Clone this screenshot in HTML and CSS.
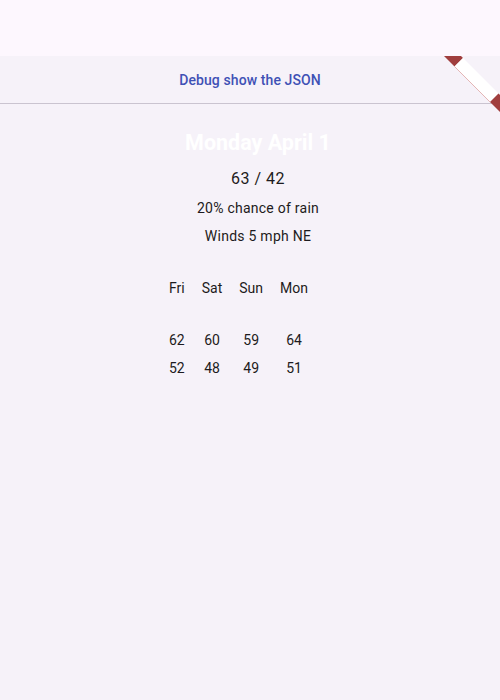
FILE: index.html
```html
<!DOCTYPE html>
<html>
<head>
<meta charset="utf-8">
<link rel="stylesheet" href="styles.css">
</head>
<body>
<div class="appbar"></div>
<main class="page">
  <div class="action-row">
    <button class="text-btn">Debug show the JSON</button>
  </div>
  <hr class="divider">
  <section class="today">
    <h1 class="day-title">Monday April 1</h1>
    <div class="temps">63 / 42</div>
    <div class="info">20% chance of rain</div>
    <div class="info winds">Winds 5 mph NE</div>
  </section>
  <section class="forecast">
    <div class="fcol"><span class="fday">Fri</span><span class="ficon"></span><span class="fnum">62</span><span class="fnum">52</span></div>
    <div class="fcol"><span class="fday">Sat</span><span class="ficon"></span><span class="fnum">60</span><span class="fnum">48</span></div>
    <div class="fcol"><span class="fday">Sun</span><span class="ficon"></span><span class="fnum">59</span><span class="fnum">49</span></div>
    <div class="fcol"><span class="fday">Mon</span><span class="ficon"></span><span class="fnum">64</span><span class="fnum">51</span></div>
  </section>
</main>
<svg class="debug-banner" width="60" height="56" viewBox="440 56 60 56" aria-hidden="true">
  <polygon points="447.5,42.5 463,58 454.5,66.5 439,51" fill="#a03e3e"/>
  <polygon points="454.5,66.5 490,102 498.5,93.5 463,58" fill="#ffffff"/>
  <line x1="454.5" y1="66.5" x2="490" y2="102" stroke="#e4b5b5" stroke-width="1"/>
  <polygon points="490,102 504,116 512.5,107.5 498.5,93.5" fill="#a03e3e"/>
</svg>
</body>
</html>
```
FILE: styles.css
```css
html, body {
  margin: 0;
  padding: 0;
}
body {
  width: 500px;
  height: 700px;
  background: #f6f2f9;
  font-family: Roboto, "Liberation Sans", sans-serif;
  color: #1d1b20;
  position: relative;
  overflow: hidden;
}
.appbar {
  height: 56px;
  background: #fdf7fe;
}
.page {
  background: #f6f2f9;
}
.action-row {
  height: 47px;
  display: flex;
  justify-content: center;
  align-items: center;
}
.text-btn {
  border: 0;
  background: transparent;
  font-family: Roboto, "Liberation Sans", sans-serif;
  font-size: 14px;
  font-weight: 500;
  color: #3f51b5;
  letter-spacing: 0.1px;
  padding: 0 12px;
  height: 40px;
}
.divider {
  margin: 0;
  border: 0;
  height: 1px;
  background: #cac4d0;
}
.today {
  display: flex;
  flex-direction: column;
  align-items: center;
  padding-top: 24px;
  padding-left: 16px;
}
.day-title {
  margin: 0;
  font-size: 21.5px;
  font-weight: 700;
  color: #ffffff;
  line-height: 30px;
}
.temps {
  font-size: 16px;
  letter-spacing: 0.5px;
  line-height: 24px;
  margin-top: 9px;
}
.info {
  font-size: 14px;
  letter-spacing: 0.25px;
  line-height: 20px;
  margin-top: 7px;
  color: #1d1b20;
}
.winds {
  margin-top: 8px;
}
.forecast {
  display: flex;
  justify-content: center;
  gap: 17px;
  padding-right: 23px;
  margin-top: 32px;
}
.fcol {
  display: flex;
  flex-direction: column;
  align-items: center;
  font-size: 14px;
}
.fday {
  line-height: 20px;
}
.ficon {
  height: 28px;
}
.fnum {
  line-height: 28px;
}
.debug-banner {
  position: absolute;
  left: 440px;
  top: 56px;
}
```
